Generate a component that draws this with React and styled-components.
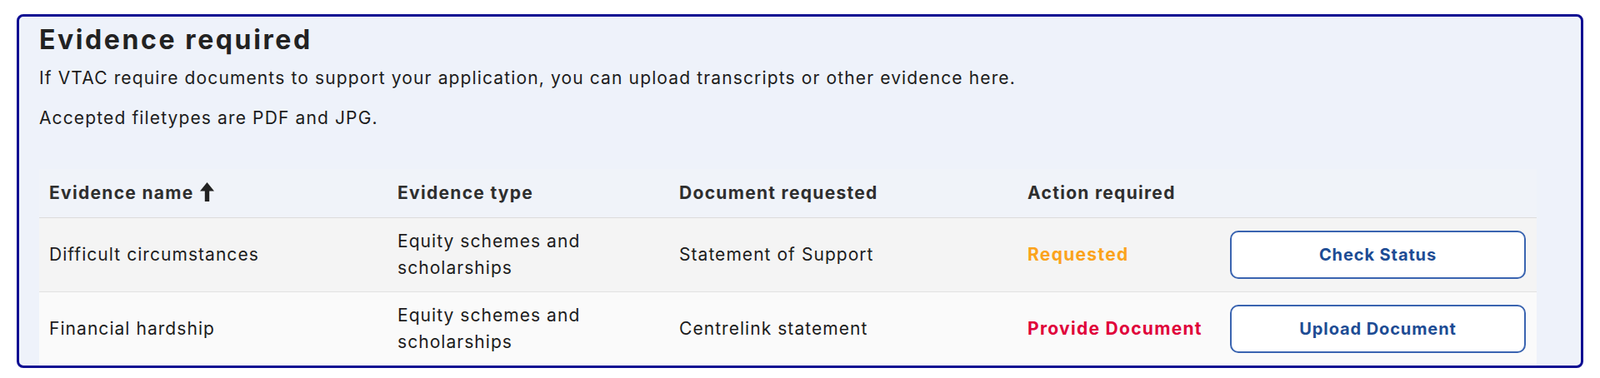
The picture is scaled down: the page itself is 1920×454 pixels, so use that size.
import React from 'react';
import styled, { createGlobalStyle } from 'styled-components';

const GlobalStyle = createGlobalStyle`
  body {
    margin: 0;
    background: #ffffff;
    font-family: Inter, "Open Sans", sans-serif;
    color: #1c1c1c;
  }
`;

const Page = styled.div`
  padding: 17px 20px 0 20px;
`;

const Card = styled.section`
  border: 3px solid #0c0c92;
  border-radius: 8px;
  background: #eef2fa;
  padding: 6px 53px 0 24px;
  overflow: hidden;
`;

const Title = styled.h2`
  margin: 0;
  font-size: 32px;
  line-height: 44px;
  font-weight: 700;
  letter-spacing: 2.6px;
  color: #222222;
`;

const Text = styled.p`
  margin: 0;
  font-size: 21px;
  line-height: 48px;
  letter-spacing: 1.13px;
  color: #1c1c1c;
`;

const Table = styled.table`
  width: 100%;
  margin-top: 37px;
  border-collapse: collapse;
  table-layout: fixed;
`;

const HeadRow = styled.tr`
  height: 58px;
  background: #f0f3f9;
  border-bottom: 1px solid #dcdcdc;
`;

const Th = styled.th`
  text-align: left;
  padding: 0 12px;
  font-size: 21px;
  font-weight: 700;
  letter-spacing: 1.3px;
  color: #2e2e2e;
  white-space: nowrap;
`;

const SortIcon = styled.svg`
  width: 17px;
  height: 23px;
  margin-left: 7px;
  vertical-align: -3px;
`;

const Row = styled.tr`
  height: 89px;
  background: ${(p) => (p.$alt ? '#fafafa' : '#f4f4f4')};
  border-bottom: ${(p) => (p.$alt ? 'none' : '1px solid #e2e2e2')};
`;

const Td = styled.td`
  padding: 0 12px;
  font-size: 21px;
  line-height: 32px;
  letter-spacing: 1.05px;
  color: #1c1c1c;
`;

const Status = styled.span`
  font-weight: 700;
  letter-spacing: 1.3px;
  color: ${(p) => p.$color};
`;

const ActionButton = styled.button`
  width: 355px;
  height: 58px;
  border: 2px solid #3a64b0;
  border-radius: 10px;
  background: #ffffff;
  color: #1d4c94;
  font-family: inherit;
  font-size: 20px;
  font-weight: 700;
  letter-spacing: 0.9px;
  cursor: pointer;
`;

const rows = [
  {
    name: 'Difficult circumstances',
    type: 'Equity schemes and scholarships',
    doc: 'Statement of Support',
    status: 'Requested',
    color: '#fba31c',
    button: 'Check Status',
  },
  {
    name: 'Financial hardship',
    type: 'Equity schemes and scholarships',
    doc: 'Centrelink statement',
    status: 'Provide Document',
    color: '#e0003a',
    button: 'Upload Document',
  },
];

export default function App() {
  return (
    <Page>
      <GlobalStyle />
      <Card>
        <Title>Evidence required</Title>
        <Text>If VTAC require documents to support your application, you can upload transcripts or other evidence here.</Text>
        <Text>Accepted filetypes are PDF and JPG.</Text>
        <Table>
          <colgroup>
            <col style={{ width: 418 }} />
            <col style={{ width: 338 }} />
            <col style={{ width: 418 }} />
            <col style={{ width: 243 }} />
            <col />
          </colgroup>
          <thead>
            <HeadRow>
              <Th>
                Evidence name
                <SortIcon viewBox="0 0 17 23">
                  <path d="M8.5 0 L17 10.5 H11.2 V23 H5.8 V10.5 H0 Z" fill="#222" />
                </SortIcon>
              </Th>
              <Th>Evidence type</Th>
              <Th>Document requested</Th>
              <Th>Action required</Th>
              <Th />
            </HeadRow>
          </thead>
          <tbody>
            {rows.map((r, i) => (
              <Row key={r.name} $alt={i % 2 === 1}>
                <Td>{r.name}</Td>
                <Td>{r.type}</Td>
                <Td>{r.doc}</Td>
                <Td><Status $color={r.color}>{r.status}</Status></Td>
                <Td><ActionButton>{r.button}</ActionButton></Td>
              </Row>
            ))}
          </tbody>
        </Table>
      </Card>
    </Page>
  );
}
